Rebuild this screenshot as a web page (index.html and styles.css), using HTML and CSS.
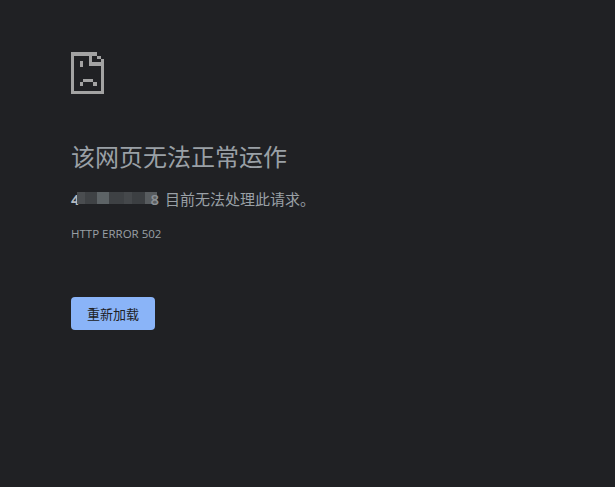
FILE: index.html
```html
<!DOCTYPE html>
<html>
    <head>
    <meta charset="utf-8">
    <link rel="stylesheet" href="styles.css">
    </head>
    <body>
        <div class="error-page">
            <svg class="sad-icon" viewBox="0 0 99 125" shape-rendering="crispEdges">
                <path fill="#a3a3a3" d="M0 0H79V10H89V20H99V125H0ZM10 10V115H89V40H54V10ZM64 10V30H89V20H79V10ZM27 26H37V44H27ZM37 80H67V90H77V100H67V90H37V100H27V90H37Z" fill-rule="evenodd"/>
            </svg>
            <h1 class="title">该网页无法正常运作</h1>
            <p class="message"><span class="ip"><span class="ip-text">4</span><span class="mosaic"></span><span class="ip-tail">8</span></span><span>目前无法处理此请求。</span></p>
            <div class="error-code">HTTP ERROR 502</div>
            <button class="reload-button">重新加载</button>
        </div>
    </body>
</html>
```

FILE: styles.css
```css
html, body {
  margin: 0;
  height: 100%;
}
body {
  background-color: #202124;
  font-family: "Open Sans", "Noto Sans CJK SC", sans-serif;
  overflow: hidden;
}
.error-page {
  display: flex;
  flex-direction: column;
  align-items: flex-start;
  padding: 52px 0 0 71px;
}
.sad-icon {
  width: 33px;
  height: 42px;
}
.title {
  margin: 48px 0 0 0;
  font-size: 24px;
  line-height: 29px;
  font-weight: 400;
  color: #9aa0a6;
}
.message {
  display: flex;
  align-items: center;
  gap: 4px;
  margin: 18px 0 0 0;
  font-size: 15px;
  line-height: 20px;
  color: #9aa0a6;
}
.ip {
  position: relative;
  display: block;
  width: 90px;
  height: 20px;
}
.ip-text {
  font-weight: 700;
  color: #b4b9be;
}
.ip-tail {
  position: absolute;
  right: 2px;
  top: 0;
  font-weight: 600;
  color: #8a8f94;
}
.mosaic {
  position: absolute;
  left: 6px;
  top: 3px;
  width: 80px;
  height: 12px;
  background: linear-gradient(90deg, #4a4d50 0, #4a4d50 8px, #3f4245 8px, #3f4245 20px, #5d6366 20px, #5d6366 32px, #3e4144 32px, #3e4144 47px, #45484b 47px, #45484b 55px, #3c3f42 55px, #3c3f42 68px, #585c5f 68px, #585c5f 80px);
}
.error-code {
  margin-top: 17px;
  font-size: 11.5px;
  line-height: 16px;
  color: #9aa0a6;
}
.reload-button {
  margin-top: 55px;
  width: 84px;
  height: 33px;
  padding: 0;
  border: none;
  border-radius: 4px;
  background-color: #8ab4f8;
  color: #202124;
  font-family: "Open Sans", "Noto Sans CJK SC", sans-serif;
  font-size: 13px;
}
```
